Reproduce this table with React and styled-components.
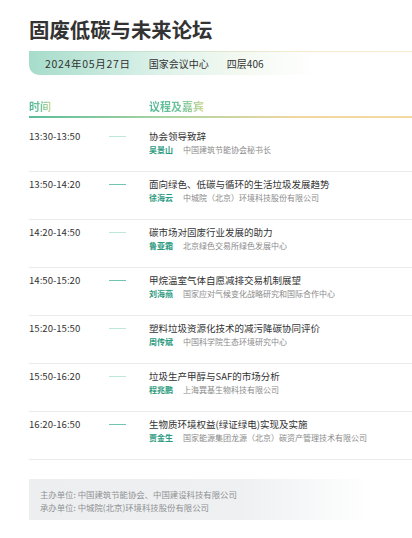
import React from "react";
import styled, { createGlobalStyle } from "styled-components";

const GlobalStyle = createGlobalStyle`
  body {
    margin: 0;
    background: #fff;
    font-family: "Noto Sans CJK SC", "Noto Sans", sans-serif;
    color: #333;
  }
`;

const agenda = [
  { time: "13:30-13:50", title: "协会领导致辞", name: "吴景山", org: "中国建筑节能协会秘书长", light: true },
  { time: "13:50-14:20", title: "面向绿色、低碳与循环的生活垃圾发展趋势", name: "徐海云", org: "中城院（北京）环境科技股份有限公司" },
  { time: "14:20-14:50", title: "碳市场对固废行业发展的助力", name: "鲁亚霜", org: "北京绿色交易所绿色发展中心", light: true },
  { time: "14:50-15:20", title: "甲烷温室气体自愿减排交易机制展望", name: "刘海燕", org: "国家应对气候变化战略研究和国际合作中心" },
  { time: "15:20-15:50", title: "塑料垃圾资源化技术的减污降碳协同评价", name: "周传斌", org: "中国科学院生态环境研究中心", light: true },
  { time: "15:50-16:20", title: "垃圾生产甲醇与SAF的市场分析", name: "程兆鹏", org: "上海巽基生物科技有限公司", light: true },
  { time: "16:20-16:50", title: "生物质环境权益(绿证绿电)实现及实施", name: "贾金生", org: "国家能源集团龙源（北京）碳资产管理技术有限公司" }
];

const Page = styled.div`
  padding: 16px 0 20px 29px;
`;

const Title = styled.h1`
  margin: 0;
  font-size: 20.4px;
  line-height: 26px;
  font-weight: 700;
  color: #333;
`;

const InfoBar = styled.div`
  margin-top: 9px;
  height: 24px;
  display: flex;
  align-items: center;
  gap: 18px;
  padding-left: 16px;
  font-size: 10px;
  color: #333;
  border-bottom-left-radius: 10px;
  background:
    linear-gradient(90deg, #a6dccb 0%, #def2ea 35%, #f3f9f1 55%, rgba(255, 255, 255, 0) 75%) top / 100% 100% no-repeat,
    #fff;
  position: relative;

  &::before {
    content: "";
    position: absolute;
    left: 0;
    right: 0;
    top: 0;
    height: 1px;
    background: linear-gradient(90deg, #a6dccb 0%, #f5ead0 70%, #f7ecd3 100%);
  }
`;

const DateText = styled.span`
  font-size: 10.5px;
  letter-spacing: 0.7px;
`;

const HeadRow = styled.div`
  margin-top: 24px;
  display: grid;
  grid-template-columns: 120px 1fr;
  padding-bottom: 3px;
  border-bottom: 2px solid transparent;
  border-image: linear-gradient(90deg, #5bbd9b 0%, #a9d3a2 35%, #f1d79f 70%, #f3d9a3 100%) 1;
`;

const HeadLabel = styled.span`
  font-size: 11px;
  line-height: 14px;
  font-weight: 700;
  justify-self: start;
  background: linear-gradient(90deg, #52b894 0%, #6fc29a 55%, #cfdc9e 100%);
  -webkit-background-clip: text;
  background-clip: text;
  color: transparent;
`;

const List = styled.div`
  padding-top: 6px;
`;

const Row = styled.div`
  display: grid;
  grid-template-columns: 80px 40px 1fr;
  padding: 5px 0 14px;
  border-bottom: 1px solid #e9eaea;
`;

const Time = styled.div`
  font-size: 9.6px;
  line-height: 14px;
  color: #333;
`;

const Dash = styled.div`
  width: 17px;
  height: 1px;
  margin-top: 7px;
  background: ${(p) => (p.$light ? "#bfe6dc" : "#6fc5b0")};
`;

const TalkTitle = styled.div`
  font-size: 9.5px;
  line-height: 14px;
  color: #333;
  white-space: nowrap;
`;

const Speaker = styled.div`
  display: flex;
  gap: 10px;
  font-size: 8px;
  line-height: 14px;
  white-space: nowrap;
`;

const Name = styled.span`
  color: #2a9a7e;
  font-weight: 700;
`;

const Org = styled.span`
  color: #8a8a8a;
`;

const Footer = styled.div`
  margin-top: 19px;
  padding: 9px 11px 5px;
  font-size: 8.4px;
  line-height: 13.3px;
  color: #8f9194;
  background: linear-gradient(90deg, #eceef0 0%, #eef0f1 55%, rgba(255, 255, 255, 0) 90%);
`;

export default function App() {
  return (
    <>
      <GlobalStyle />
      <Page>
        <Title>固废低碳与未来论坛</Title>
        <InfoBar>
          <DateText>2024年05月27日</DateText>
          <span>国家会议中心</span>
          <span>四层406</span>
        </InfoBar>
        <HeadRow>
          <HeadLabel>时间</HeadLabel>
          <HeadLabel>议程及嘉宾</HeadLabel>
        </HeadRow>
        <List>
          {agenda.map((item) => (
            <Row key={item.time}>
              <Time>{item.time}</Time>
              <Dash $light={item.light} />
              <div>
                <TalkTitle>{item.title}</TalkTitle>
                <Speaker>
                  <Name>{item.name}</Name>
                  <Org>{item.org}</Org>
                </Speaker>
              </div>
            </Row>
          ))}
        </List>
        <Footer>
          <div>主办单位: 中国建筑节能协会、中国建设科技有限公司</div>
          <div>承办单位: 中城院(北京)环境科技股份有限公司</div>
        </Footer>
      </Page>
    </>
  );
}
